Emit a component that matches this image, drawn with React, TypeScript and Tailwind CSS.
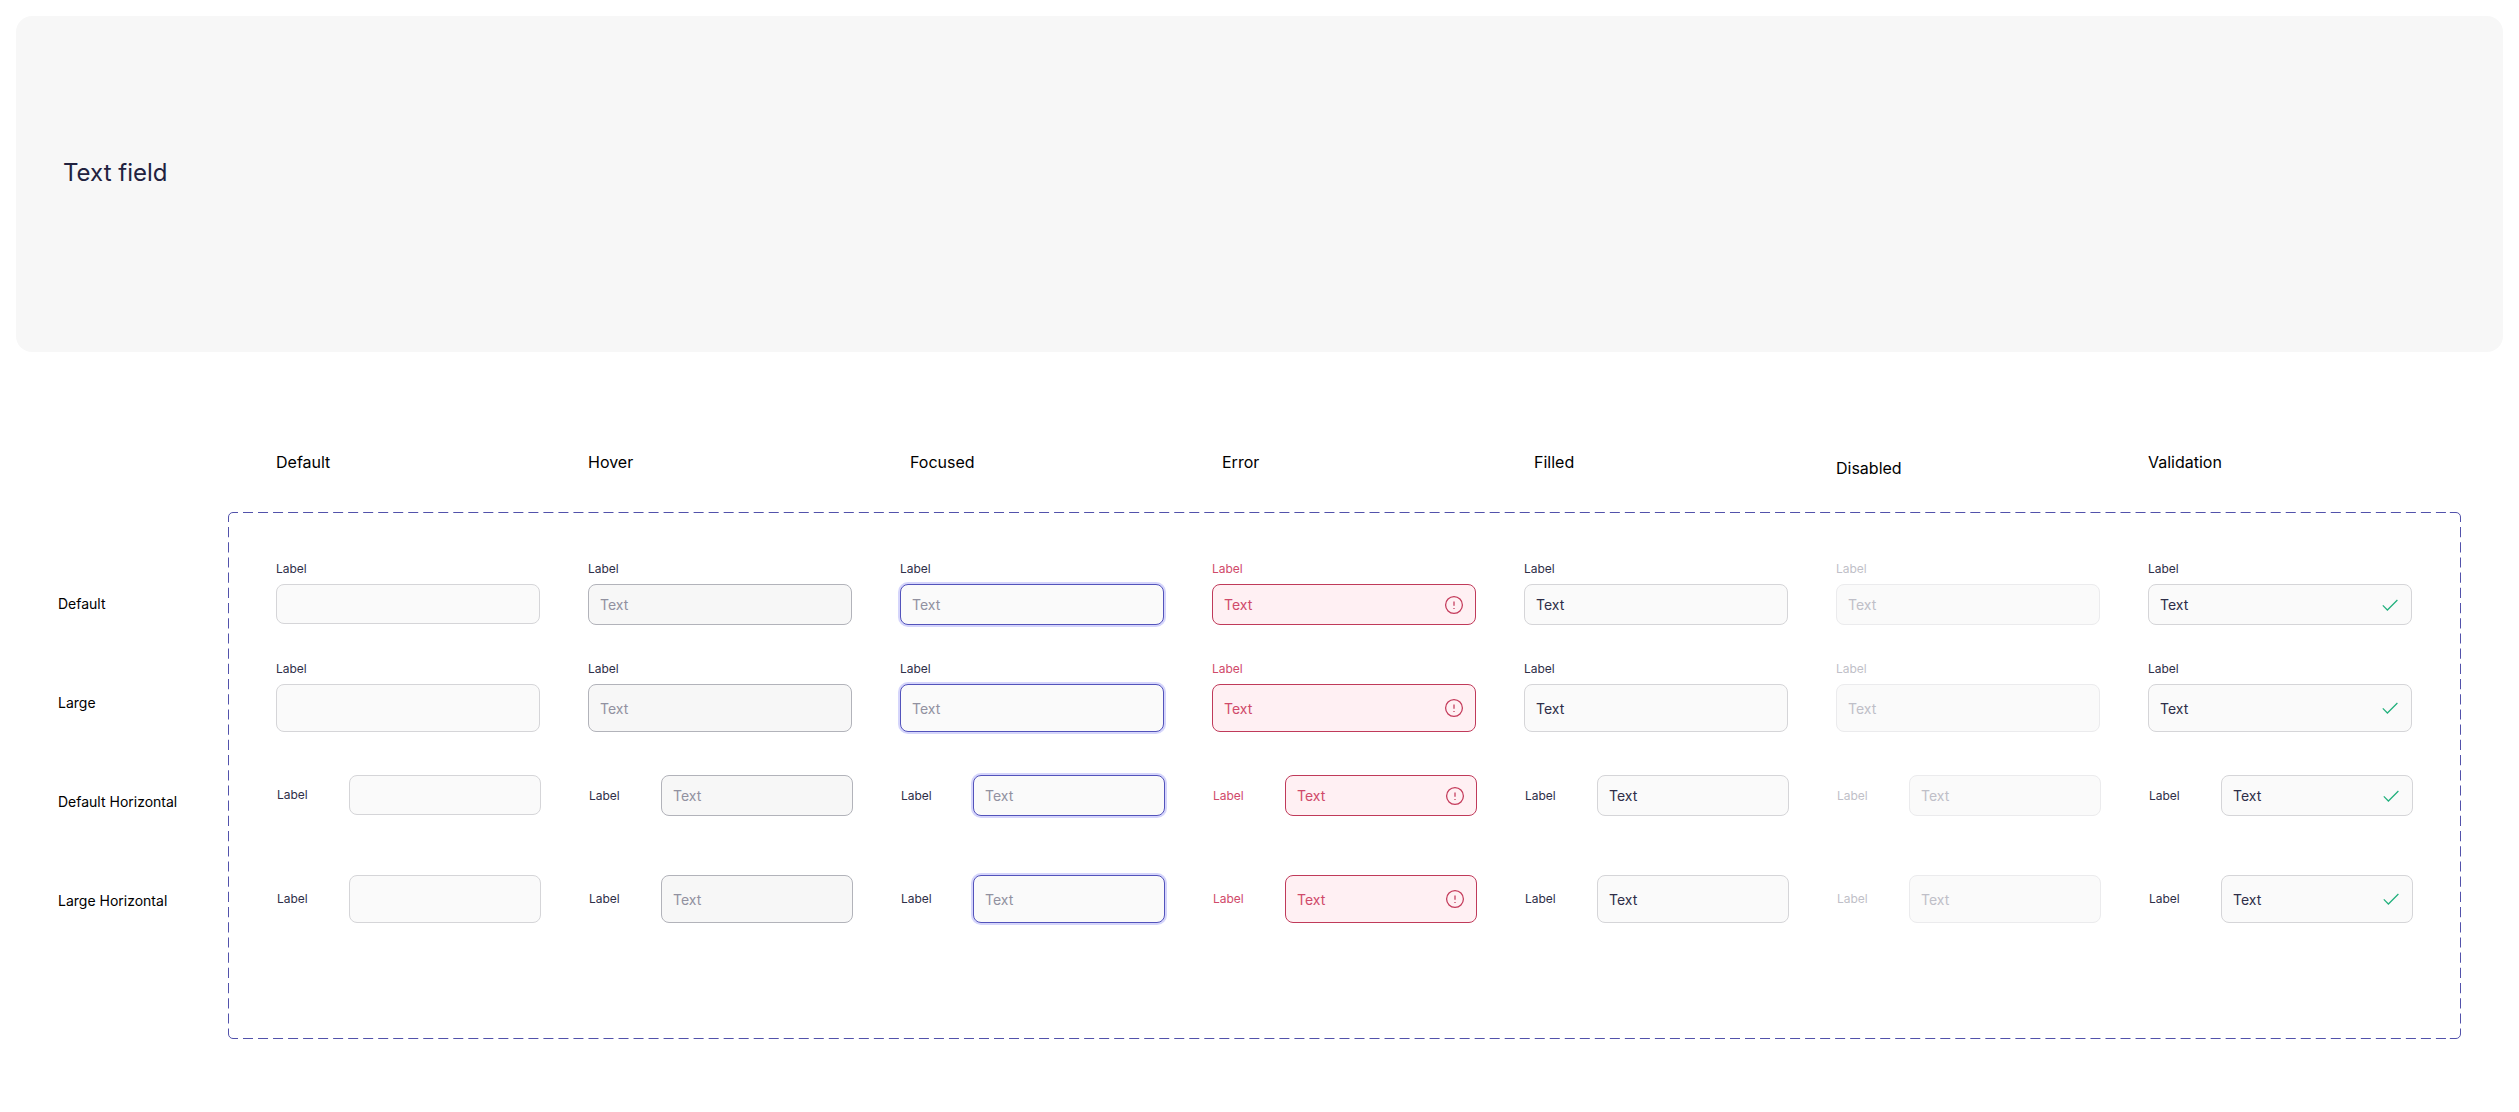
import type { ReactNode } from "react";
import clsx from "clsx";

type FieldState = {
  name: string;
  heading?: string;
  label: string;
  input: string;
  placeholder?: string;
  value?: string;
  disabled?: boolean;
  icon?: ReactNode;
};

const ErrorIcon = () => (
  <svg viewBox="0 0 20 20" fill="none" stroke="currentColor" className="w-5 h-5 text-[#c43a5a]">
    <circle cx="10" cy="10" r="8.4" strokeWidth="1.25" />
    <path d="M10 6.6v4.2" strokeWidth="1.25" />
    <path d="M10 12.9v1.2" strokeWidth="1.25" />
  </svg>
);

const CheckIcon = () => (
  <svg viewBox="0 0 20 20" fill="none" stroke="currentColor" className="w-5 h-5 text-[#22b07d]">
    <path d="M2.8 10.4l4.6 4.6L17.4 5" strokeWidth="1.25" />
  </svg>
);

const states: FieldState[] = [
  {
    name: "Default",
    label: "text-[#2e2e48]",
    input: "bg-[#fafafa] border-[#d5d5d8]",
  },
  {
    name: "Hover",
    label: "text-[#2e2e48]",
    input: "bg-[#f7f7f7] border-[#b2b3ba] placeholder:text-[#9191a0]",
    placeholder: "Text",
  },
  {
    name: "Focused",
    heading: "pl-2.5",
    label: "text-[#2e2e48]",
    input: "bg-[#fafafa] border-[#5353bb] ring-2 ring-[#d5d5fb] placeholder:text-[#9191a0]",
    placeholder: "Text",
  },
  {
    name: "Error",
    heading: "pl-2.5",
    label: "text-[#d04a6a]",
    input: "bg-[#fff0f3] border-[#c03a5a] text-[#d04a6a]",
    value: "Text",
    icon: <ErrorIcon />,
  },
  {
    name: "Filled",
    heading: "pl-2.5",
    label: "text-[#2e2e48]",
    input: "bg-[#fafafa] border-[#d5d5d8] text-[#2e2e48]",
    value: "Text",
  },
  {
    name: "Disabled",
    heading: "pt-1.5",
    label: "text-[#bfbfc8]",
    input: "bg-[#fafafa] border-[#ebebed] placeholder:text-[#bfbfc8]",
    placeholder: "Text",
    disabled: true,
  },
  {
    name: "Validation",
    label: "text-[#2e2e48]",
    input: "bg-[#fafafa] border-[#d5d5d8] text-[#2e2e48]",
    value: "Text",
    icon: <CheckIcon />,
  },
];

const rows = [
  { name: "Default", large: false, horizontal: false },
  { name: "Large", large: true, horizontal: false },
  { name: "Default Horizontal", large: false, horizontal: true },
  { name: "Large Horizontal", large: true, horizontal: true },
];

function TextField({ id, state, large, horizontal }: { id: string; state: FieldState; large: boolean; horizontal: boolean }) {
  const empty = !state.value && !state.placeholder;

  return (
    <div className={clsx("flex", horizontal ? "items-center ml-px -mr-px mt-3.5" : "flex-col gap-[7px]")}>
      <label htmlFor={id} className={clsx("text-xs", horizontal && "w-[72px] shrink-0", state.label)}>
        Label
      </label>
      <div className={clsx("relative", horizontal && "flex-1 min-w-0")}>
        <input
          id={id}
          type="text"
          defaultValue={state.value}
          placeholder={state.placeholder}
          disabled={state.disabled}
          className={clsx(
            "block w-full rounded-lg border px-[11px] text-sm outline-none",
            large ? "h-12" : empty ? "h-10" : "h-[41px]",
            state.input
          )}
        />
        {state.icon && (
          <span className="absolute inset-y-0 right-3 flex items-center pointer-events-none">{state.icon}</span>
        )}
      </div>
    </div>
  );
}

// Cuts gaps into the panel's solid border, so the corners stay whole
const BorderGaps = () => (
  <svg aria-hidden="true" className="absolute -inset-px w-[calc(100%+2px)] h-[calc(100%+2px)] pointer-events-none" stroke="#fff" strokeWidth="4">
    <line x1="10" y1="0" x2="99.5%" y2="0" strokeDasharray="5 10.02" />
    <line x1="10" y1="100%" x2="99.5%" y2="100%" strokeDasharray="5 10.02" />
    <line x1="0" y1="10" x2="0" y2="98.2%" strokeDasharray="5 10.2" />
    <line x1="100%" y1="10" x2="100%" y2="98.2%" strokeDasharray="5 10.2" />
  </svg>
);

export default function App() {
  return (
    <div className="min-h-screen bg-white text-black font-['Inter',sans-serif]">
      <header className="px-4 pt-4">
        <div className="rounded-2xl bg-[#f7f7f7] pl-[47px] pt-[141px] pb-[163px]">
          <h1 className="text-2xl text-[#22223f]">Text field</h1>
        </div>
      </header>

      <main className="px-[58px] pt-[98px] pb-[73px]">
        {/* State names */}
        <div className="ml-[170px] pl-12 pr-[49px] grid grid-cols-7 gap-x-12">
          {states.map((state) => (
            <h2 key={state.name} className={clsx("text-base", state.heading)}>
              {state.name}
            </h2>
          ))}
        </div>

        <div className="mt-8 grid grid-cols-[170px_1fr]">
          {/* Variant names */}
          <div className="pt-[82px]">
            {rows.map((row) => (
              <h3 key={row.name} className="h-[99px] text-sm">
                {row.name}
              </h3>
            ))}
          </div>

          <section className="relative rounded-[5px] border border-[#5252ab] pt-12 pb-[77px] pl-[47px] pr-12">
            {rows.map((row) => (
              <div key={row.name} className="h-[100px] grid grid-cols-7 gap-x-12 items-start">
                {states.map((state) => (
                  <TextField
                    key={state.name}
                    id={`${row.name}-${state.name}`.toLowerCase().replace(" ", "-")}
                    state={state}
                    large={row.large}
                    horizontal={row.horizontal}
                  />
                ))}
              </div>
            ))}
            <BorderGaps />
          </section>
        </div>
      </main>
    </div>
  );
}
